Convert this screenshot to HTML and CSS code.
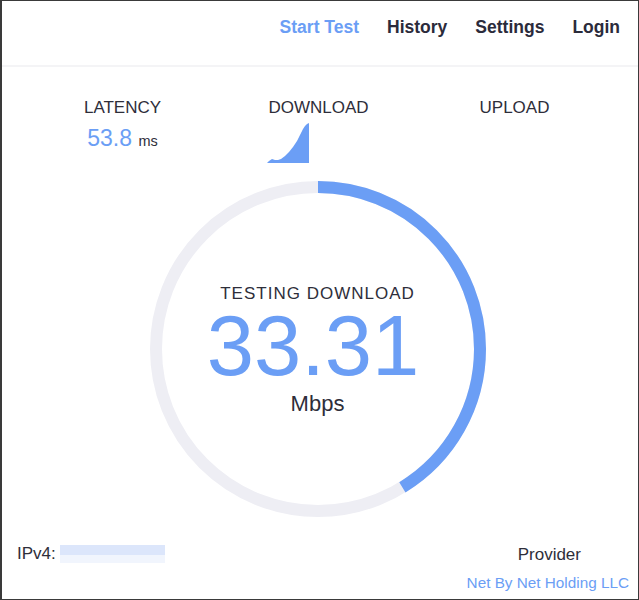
FILE: index.html
```html
<!DOCTYPE html>
<html lang="en">
<head>
    <meta charset="UTF-8">
    <meta name="viewport" content="width=device-width, initial-scale=1.0">
    <title>Speed Test</title>
    <link rel="stylesheet" href="styles.css">
</head>
<body>
    <div id="app">
        <header class="topbar">
            <nav class="nav">
                <a class="nav-link active" href="#">Start Test</a>
                <a class="nav-link" href="#">History</a>
                <a class="nav-link" href="#">Settings</a>
                <a class="nav-link" href="#">Login</a>
            </nav>
        </header>

        <section class="stats">
            <div class="stat">
                <div class="stat-title">LATENCY</div>
                <div class="stat-value">53.8 <span class="unit">ms</span></div>
            </div>
            <div class="stat">
                <div class="stat-title">DOWNLOAD</div>
                <svg class="spark" width="44" height="42" viewBox="0 0 44 42">
                    <path d="M0 41 L2 39 L5 37 L8 38 L11 38 L14 37 L18 34 L22 30 L26 25 L30 19 L33 13 L36 7 L38 4 L40 2 L42 1 L42 41 Z" fill="#6b9ef5"/>
                </svg>
            </div>
            <div class="stat">
                <div class="stat-title">UPLOAD</div>
            </div>
        </section>

        <section class="gauge-wrap">
            <div class="gauge">
                <svg width="336" height="336" viewBox="0 0 336 336">
                    <circle cx="168" cy="168" r="162" fill="none" stroke="#eeeef4" stroke-width="12"/>
                    <circle cx="168" cy="168" r="162" fill="none" stroke="#6b9ef5" stroke-width="12"
                        stroke-dasharray="420 1100" transform="rotate(-90 168 168)"/>
                </svg>
                <div class="gauge-text">
                    <div class="gauge-label">TESTING DOWNLOAD</div>
                    <div class="gauge-value">33.31</div>
                    <div class="gauge-unit">Mbps</div>
                </div>
            </div>
        </section>

        <footer class="info">
            <div class="ip">IPv4: <span class="ip-blur"></span></div>
            <div class="provider">
                <div class="provider-title">Provider</div>
                <div class="provider-name">Net By Net Holding LLC</div>
            </div>
        </footer>
    </div>
</body>
</html>
```

FILE: styles.css
```css
body {
    margin: 0;
    font-family: 'Liberation Sans', Arial, sans-serif;
    background-color: #fff;
    color: #2e2e3a;
}

#app {
    box-sizing: border-box;
    height: 600px;
    border: 1px solid #3a3a3a;
    border-left-width: 2px;
    display: flex;
    flex-direction: column;
}

.topbar {
    height: 64px;
    border-bottom: 2px solid #f4f4f6;
    display: flex;
    justify-content: flex-end;
    align-items: flex-start;
}

.nav {
    display: flex;
    gap: 28px;
    padding-right: 18px;
    padding-top: 16px;
}

.nav-link {
    font-size: 17.5px;
    font-weight: bold;
    color: #2b2b3b;
    text-decoration: none;
}

.nav-link.active {
    color: #6b9ef5;
}

.stats {
    display: grid;
    grid-template-columns: repeat(3, 196px);
    justify-content: center;
    padding-top: 31px;
    padding-right: 3px;
    height: 67px;
}

.stat {
    display: flex;
    flex-direction: column;
    align-items: center;
}

.stat-title {
    font-size: 17px;
    color: #2e2e3a;
    line-height: 20px;
}

.stat-value {
    font-size: 23px;
    color: #6b9ef5;
    margin-top: 8px;
    line-height: 24px;
}

.stat-value .unit {
    font-size: 14.5px;
    color: #2e2e3a;
}

.spark {
    display: block;
    margin-top: 4px;
    margin-left: -59px;
}

.gauge-wrap {
    display: flex;
    justify-content: center;
    padding-top: 16px;
    padding-right: 5px;
}

.gauge {
    position: relative;
    width: 336px;
    height: 336px;
}

.gauge svg {
    display: block;
}

.gauge-text {
    position: absolute;
    top: 103px;
    left: 0;
    right: 0;
    text-align: center;
}

.gauge-label {
    font-size: 17px;
    line-height: 20px;
    letter-spacing: 1px;
    color: #2e2e3a;
}

.gauge-value {
    font-size: 85px;
    line-height: 80px;
    color: #6b9ef5;
    margin-top: 2px;
    padding-right: 9px;
}

.gauge-unit {
    font-size: 22px;
    color: #2e2e3a;
    margin-top: 5px;
}

.info {
    display: flex;
    justify-content: space-between;
    padding: 27px 9px 0 15px;
}

.ip {
    font-size: 17px;
    display: flex;
    align-items: center;
    gap: 4px;
    height: 20px;
}

.ip-blur {
    display: inline-block;
    width: 105px;
    height: 18px;
    background: linear-gradient(to bottom, #dce6fb 0, #dce6fb 55%, #f1f5fd 55%);
}

.provider {
    display: flex;
    flex-direction: column;
    align-items: flex-end;
}

.provider-title {
    font-size: 17px;
    margin-right: 48px;
    margin-top: 1px;
}

.provider-name {
    font-size: 15.3px;
    color: #6b9ef5;
    margin-top: 9px;
}
```
